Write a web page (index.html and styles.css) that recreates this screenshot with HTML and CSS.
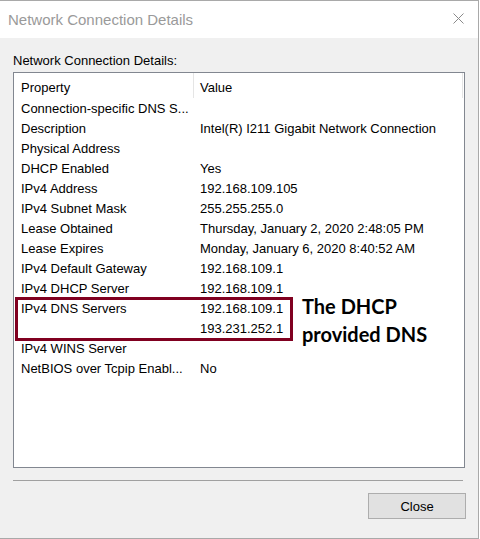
FILE: index.html
```html
<!DOCTYPE html>
<html lang="en">
<head>
    <meta charset="UTF-8">
    <title>Network Connection Details</title>
    <link rel="stylesheet" href="styles.css">
</head>
<body>

<div class="window">
    <!-- Title bar -->
    <div class="titlebar">
        <span class="title">Network Connection Details</span>
        <svg class="close-x" width="11" height="11" viewBox="0 0 11 11">
            <path d="M0.5 0.5 L10.5 10.5 M10.5 0.5 L0.5 10.5" stroke="#8a8a8a" stroke-width="1" fill="none"/>
        </svg>
    </div>

    <div class="content">
        <div class="label">Network Connection Details:</div>

        <div class="listbox">
            <div class="header">
                <div class="hcell">Property</div>
                <div class="hcell">Value</div>
            </div>

            <div class="row"><div class="prop">Connection-specific DNS S...</div><div class="val"></div></div>
            <div class="row"><div class="prop">Description</div><div class="val">Intel(R) I211 Gigabit Network Connection</div></div>
            <div class="row"><div class="prop">Physical Address</div><div class="val"></div></div>
            <div class="row"><div class="prop">DHCP Enabled</div><div class="val">Yes</div></div>
            <div class="row"><div class="prop">IPv4 Address</div><div class="val">192.168.109.105</div></div>
            <div class="row"><div class="prop">IPv4 Subnet Mask</div><div class="val">255.255.255.0</div></div>
            <div class="row"><div class="prop">Lease Obtained</div><div class="val">Thursday, January 2, 2020 2:48:05 PM</div></div>
            <div class="row"><div class="prop">Lease Expires</div><div class="val">Monday, January 6, 2020 8:40:52 AM</div></div>
            <div class="row"><div class="prop">IPv4 Default Gateway</div><div class="val">192.168.109.1</div></div>
            <div class="row"><div class="prop">IPv4 DHCP Server</div><div class="val">192.168.109.1</div></div>
            <div class="row"><div class="prop">IPv4 DNS Servers</div><div class="val">192.168.109.1</div></div>
            <div class="row"><div class="prop"></div><div class="val">193.231.252.1</div></div>
            <div class="row"><div class="prop">IPv4 WINS Server</div><div class="val"></div></div>
            <div class="row"><div class="prop">NetBIOS over Tcpip Enabl...</div><div class="val">No</div></div>

            <!-- highlight over the DNS rows -->
            <div class="highlight"></div>
            <div class="note">The DHCP<br>provided DNS</div>
        </div>

        <div class="divider"></div>

        <div class="buttons">
            <button class="btn">Close</button>
        </div>
    </div>
</div>

</body>
</html>
```

FILE: styles.css
```css
body {
    margin: 0;
    padding: 0;
    background-color: #fff;
    font-family: "Liberation Sans", Arial, sans-serif;
}
.window {
    width: 478px;
    height: 537px;
    border-top: 1px solid #a9a9a9;
    border-right: 1px solid #a9a9a9;
    border-bottom: 1px solid #a9a9a9;
    display: flex;
    flex-direction: column;
}
.titlebar {
    height: 37px;
    flex-shrink: 0;
    background-color: #fff;
    display: flex;
    justify-content: space-between;
    padding: 0 14px 0 8px;
}
.title {
    font-size: 15px;
    line-height: 37px;
    color: #9a9a9a;
}
.close-x {
    margin-top: 12px;
}
.content {
    flex: 1;
    background-color: #f0f0f0;
    padding: 15px 13px 0 13px;
}
.label {
    font-size: 13px;
    line-height: 15px;
    color: #000;
}
.listbox {
    position: relative;
    margin-top: 4px;
    width: 450px;
    height: 394px;
    border: 1px solid #828790;
    background-color: #fff;
    font-size: 13px;
    color: #000;
}
.header {
    display: grid;
    grid-template-columns: 180px 269px;
    height: 25px;
}
.hcell {
    border-right: 1px solid #e5e5e5;
    padding: 5px 0 0 7px;
    line-height: 20px;
}
.hcell + .hcell {
    padding-left: 6px;
}
.row {
    display: grid;
    grid-template-columns: 180px 1fr;
    box-sizing: border-box;
    height: 20px;
    padding-top: 1px;
    line-height: 19px;
}
.prop {
    padding-left: 7px;
    white-space: nowrap;
    overflow: hidden;
}
.val {
    padding-left: 6px;
    white-space: nowrap;
}
.highlight {
    position: absolute;
    left: 1px;
    top: 224px;
    width: 278px;
    height: 44px;
    box-sizing: border-box;
    border: 3px solid #800020;
}
.note {
    position: absolute;
    left: 288px;
    top: 219px;
    font-family: Lato, "Open Sans", sans-serif;
    font-weight: 700;
    font-size: 20px;
    line-height: 28px;
    color: #000;
}
.divider {
    margin-top: 12px;
    width: 450px;
    height: 1px;
    background-color: #a0a0a0;
}
.buttons {
    display: flex;
    justify-content: flex-end;
    margin-top: 12px;
    margin-right: -1px;
}
.btn {
    width: 98px;
    height: 26px;
    border: 1px solid #adadad;
    background-color: #e1e1e1;
    font-family: "Liberation Sans", Arial, sans-serif;
    font-size: 13px;
    color: #000;
    padding: 0;
}
```
